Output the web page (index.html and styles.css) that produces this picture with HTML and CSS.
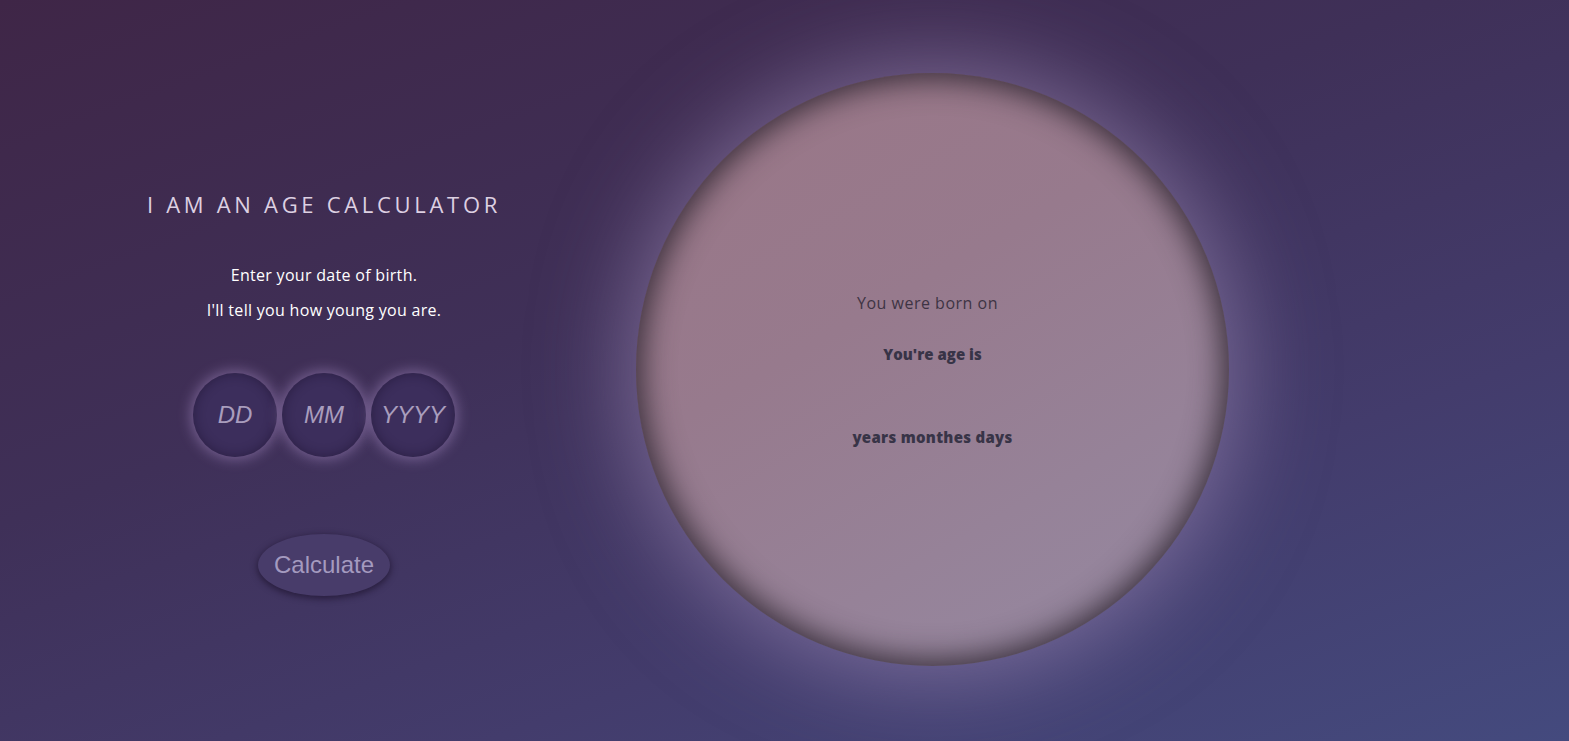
FILE: index.html
```html
<!DOCTYPE html>
<html lang="en">
<head>
<meta charset="utf-8">
<title>Age Calculator</title>
<link rel="stylesheet" href="styles.css">
</head>
<body>
<main class="page">
  <section class="panel">
    <h1 class="title">I AM AN AGE CALCULATOR</h1>
    <p class="intro">Enter your date of birth.</p>
    <p class="intro">I'll tell you how young you are.</p>
    <div class="inputs">
      <input class="field" type="text" placeholder="DD">
      <input class="field" type="text" placeholder="MM">
      <input class="field" type="text" placeholder="YYYY">
    </div>
    <button class="calc" type="button">Calculate</button>
  </section>
  <section class="result-wrap">
    <div class="orb">
      <p class="born">You were born on </p>
      <p class="age">You're age is</p>
      <p class="units">years monthes days</p>
    </div>
  </section>
</main>
</body>
</html>
```

FILE: styles.css
```css
html, body {
  margin: 0;
  padding: 0;
  height: 100%;
}
body {
  background: linear-gradient(160deg, #3f2647 0%, #3f3058 40%, #433c6c 70%, #444a7e 100%);
  font-family: "Open Sans", "Noto Sans", sans-serif;
  overflow: hidden;
}
.page {
  display: flex;
  height: 741px;
}
.panel {
  width: 624px;
  padding-left: 12px;
  display: flex;
  flex-direction: column;
  align-items: center;
  padding-top: 189px;
}
.title {
  margin: 0 0 39px;
  font-size: 22px;
  font-weight: 400;
  letter-spacing: 3.7px;
  color: #ddd0e2;
  line-height: 30px;
}
.intro {
  margin: 0;
  font-size: 16px;
  letter-spacing: 0.3px;
  line-height: 35px;
  color: #ffffff;
}
.inputs {
  display: flex;
  gap: 5px;
  margin-top: 45px;
}
.field {
  width: 84px;
  height: 84px;
  box-sizing: border-box;
  border-radius: 50%;
  border: none;
  outline: none;
  padding: 0;
  text-align: center;
  font-family: "Liberation Sans", Arial, sans-serif;
  font-style: italic;
  font-size: 24px;
  color: #a99dbd;
  background: #3c2e5c;
  box-shadow: 0 0 14px 2px rgba(190, 160, 220, 0.45), inset 0 0 12px rgba(20, 10, 35, 0.45);
}
.field::placeholder {
  color: #a99dbd;
  opacity: 1;
}
.calc {
  margin-top: 77px;
  width: 132px;
  height: 62px;
  border-radius: 50%;
  border: none;
  background: #483c6a;
  color: #a49abf;
  font-family: "Liberation Sans", Arial, sans-serif;
  font-size: 24px;
  box-shadow: 0 2px 6px 1px rgba(25, 15, 40, 0.6);
  padding: 0;
}
.result-wrap {
  padding-top: 73px;
}
.orb {
  width: 593px;
  height: 593px;
  border-radius: 50%;
  background: linear-gradient(150deg, #9a7686 0%, #977a8d 40%, #958aa3 100%);
  box-shadow: inset 0 0 30px 6px rgba(50, 40, 52, 0.95), 0 0 90px 8px rgba(165, 145, 190, 0.6);
  display: flex;
  flex-direction: column;
  align-items: center;
  color: #383447;
}
.born {
  margin: 219px 0 0 -10px;
  font-size: 16px;
  letter-spacing: 0.5px;
  color: #3e3444;
  line-height: 22px;
}
.age {
  margin: 29px 0 0;
  font-size: 15px;
  font-weight: 800;
  line-height: 22px;
}
.units {
  margin: 61px 0 0;
  font-size: 15px;
  font-weight: 800;
  letter-spacing: 0.3px;
  line-height: 22px;
}
```
